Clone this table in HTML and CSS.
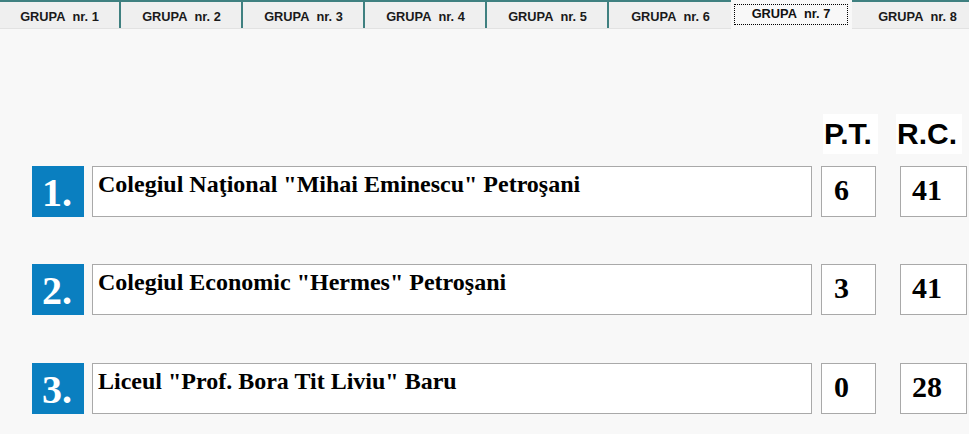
FILE: index.html
```html
<!DOCTYPE html>
<html>
<head>
<meta charset="utf-8">
<link rel="stylesheet" href="styles.css">
</head>
<body>
<div class="tabs">
  <div class="tab">GRUPA&nbsp; nr. 1</div>
  <div class="tab">GRUPA&nbsp; nr. 2</div>
  <div class="tab">GRUPA&nbsp; nr. 3</div>
  <div class="tab">GRUPA&nbsp; nr. 4</div>
  <div class="tab">GRUPA&nbsp; nr. 5</div>
  <div class="tab tab-before">GRUPA&nbsp; nr. 6</div>
  <div class="tab tab-active"><span class="focus">GRUPA&nbsp; nr. 7</span></div>
  <div class="tab tab-after">GRUPA&nbsp; nr. 8</div>
</div>
<div class="board">
  <div class="head">
    <div class="h-pt">P.T.</div>
    <div class="h-rc">R.C.</div>
  </div>
  <div class="row">
    <div class="num">1.</div>
    <div class="name">Colegiul Naţional "Mihai Eminescu" Petroşani</div>
    <div class="pt">6</div>
    <div class="rc">41</div>
  </div>
  <div class="row">
    <div class="num">2.</div>
    <div class="name">Colegiul Economic "Hermes" Petroşani</div>
    <div class="pt">3</div>
    <div class="rc">41</div>
  </div>
  <div class="row">
    <div class="num">3.</div>
    <div class="name">Liceul "Prof. Bora Tit Liviu" Baru</div>
    <div class="pt">0</div>
    <div class="rc">28</div>
  </div>
</div>
</body>
</html>
```
FILE: styles.css
```css
html, body {
  margin: 0;
  padding: 0;
  background: #f8f8f8;
  overflow: hidden;
}
body {
  width: 969px;
  height: 434px;
}
.tabs {
  display: flex;
  height: 28px;
  border-bottom: 1px solid #e2e2e2;
  white-space: nowrap;
}
.tab {
  flex: none;
  box-sizing: border-box;
  width: 122px;
  height: 28px;
  border-top: 2px solid #3f8080;
  border-right: 2px solid #3f8080;
  background: #efefef;
  font: bold 12.8px "Liberation Sans", Arial, sans-serif;
  color: #1a1a1a;
  text-align: center;
  line-height: 26px;
  padding-top: 2px;
  padding-left: 1px;
}
.tab:first-child {
  width: 121px;
  padding-left: 0;
}
.tab-before {
  border-right: none;
  width: 122px;
}
.tab-active {
  border: none;
  width: 121px;
  height: 29px;
  background: #f8f8f8;
  padding: 4px 4px 0 3px;
  line-height: 19px;
}
.focus {
  display: block;
  border: 1px dotted #000;
  height: 19px;
  line-height: 18px;
  color: #111;
}
.tab-after {
  border-right: none;
  width: 130px;
}
.board {
  padding-left: 32px;
  padding-top: 85px;
}
.head {
  display: flex;
  height: 40px;
  margin-bottom: 12px;
  padding-left: 791px;
}
.h-pt, .h-rc {
  background: #fff;
  font: bold 30px "Liberation Sans", Arial, sans-serif;
  color: #000;
  line-height: 40px;
  box-sizing: border-box;
}
.h-pt {
  width: 55px;
  padding-left: 1px;
}
.h-rc {
  width: 66px;
  margin-left: 18px;
  padding-left: 1px;
}
.row {
  display: flex;
  height: 51px;
  margin-bottom: 47px;
}
.row:nth-child(3) { margin-bottom: 48px; }
.row:last-child { margin-bottom: 0; }
.num {
  width: 52px;
  height: 51px;
  background: #0a7fc0;
  color: #fff;
  font: bold 40px "Liberation Serif", "Times New Roman", serif;
  line-height: 53px;
  box-sizing: border-box;
  padding-left: 10px;
}
.name, .pt, .rc {
  box-sizing: border-box;
  height: 51px;
  background: #fff;
  border: 1px solid #a9a9a9;
  color: #000;
  font-family: "Liberation Serif", "Times New Roman", serif;
  font-weight: bold;
}
.name {
  width: 720px;
  margin-left: 8px;
  font-size: 24px;
  line-height: 24px;
  padding: 5px 0 0 5px;
}
.pt, .rc {
  font-size: 30px;
  line-height: 46px;
  padding-left: 12px;
}
.pt {
  width: 55px;
  margin-left: 9px;
}
.rc {
  width: 67px;
  margin-left: 24px;
  padding-left: 11px;
}
```
